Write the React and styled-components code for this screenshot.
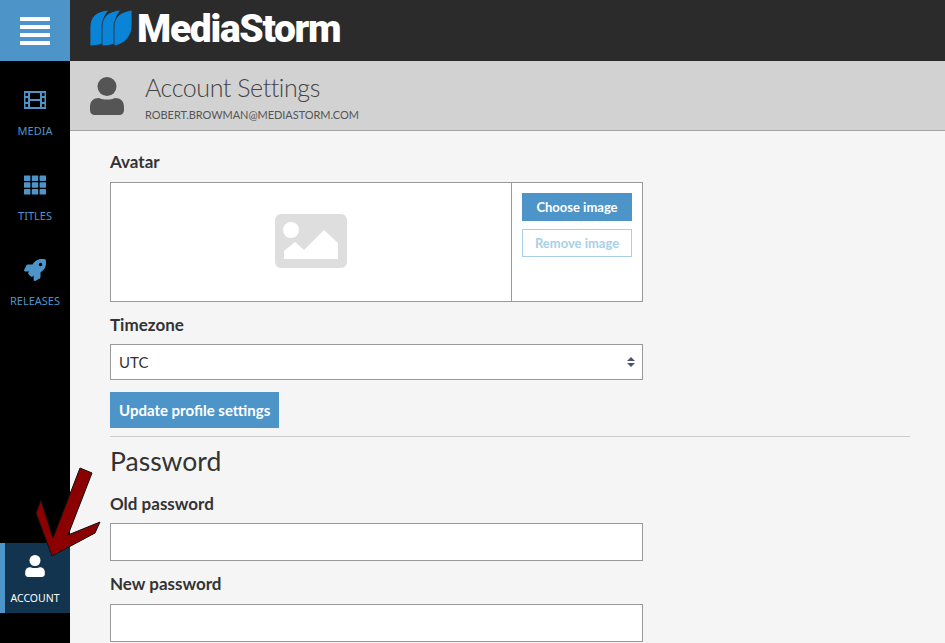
import React from "react"
import styled, { createGlobalStyle } from "styled-components"
import { FaRocket } from "react-icons/fa"

const Global = createGlobalStyle`
  html, body { margin: 0; padding: 0; height: 100%; overflow: hidden; background: #f5f5f5; }
  body { font-family: Lato, "Noto Sans", sans-serif; color: #333; }
  * { box-sizing: border-box; }
`

const FilmIcon = () => (
  <svg width="22" height="18" viewBox="0 0 22 18" fill="#4d95c9">
    <path fillRule="evenodd" d="M4 0h14v18H4zM6 2v6h10V2zM6 10v6h10v-6z" />
    <path d="M0 0h4v2H0zM0 5h4v2H0zM0 11h4v2H0zM0 16h4v2H0zM18 0h4v2h-4zM18 5h4v2h-4zM18 11h4v2h-4zM18 16h4v2h-4zM0 0h1.500v18H0zM20.500 0H22v18h-1.500z" />
  </svg>
)

const GridIcon = () => (
  <svg width="22" height="20" viewBox="0 0 22 19" fill="#4d95c9">
    <rect x="0" y="0" width="6.4" height="5.4" rx="0.6" />
    <rect x="7.8" y="0" width="6.4" height="5.4" rx="0.6" />
    <rect x="15.6" y="0" width="6.4" height="5.4" rx="0.6" />
    <rect x="0" y="6.8" width="6.4" height="5.4" rx="0.6" />
    <rect x="7.8" y="6.8" width="6.4" height="5.4" rx="0.6" />
    <rect x="15.6" y="6.8" width="6.4" height="5.4" rx="0.6" />
    <rect x="0" y="13.6" width="6.4" height="5.4" rx="0.6" />
    <rect x="7.8" y="13.6" width="6.4" height="5.4" rx="0.6" />
    <rect x="15.6" y="13.6" width="6.4" height="5.4" rx="0.6" />
  </svg>
)

const PersonIcon = ({ w, h, color = "#fff" }) => (
  <svg width={w} height={h} viewBox="0 0 34 38" fill={color}>
    <circle cx="17" cy="9.500" r="9.500" />
    <path d="M0 30c0-6 3.500-9 9-9 2.500 1 5 1.500 8 1.500s5.500-.5 8-1.500c5.500 0 9 3 9 9v3c0 3-2 5-5 5H5c-3 0-5-2-5-5z" />
  </svg>
)

const Shell = styled.div`
  display: grid;
  grid-template-columns: 70px minmax(0, 1fr);
  grid-template-rows: 61px minmax(0, 1fr);
  width: 945px;
  height: 643px;
  overflow: hidden;
  position: relative;
`

const Burger = styled.div`
  background: #4d95c9;
  display: flex;
  flex-direction: column;
  justify-content: center;
  align-items: center;
  gap: 4px;
  span { display: block; width: 30px; height: 4px; background: #fff; }
`

const TopBar = styled.header`
  background: #2b2b2b;
  display: flex;
  align-items: center;
  padding: 0 0 5px 20px;
  gap: 5px;
`

const LogoText = styled.div`
  color: #fff;
  font-family: Roboto, "Liberation Sans", sans-serif;
  font-weight: 900;
  font-size: 39px;
  letter-spacing: -1.3px;
  line-height: 1;
  padding-top: 2px;
`

const Side = styled.nav`
  background: #000;
  display: flex;
  flex-direction: column;
  padding-top: 16px;
`

const NavItem = styled.a`
  display: flex;
  flex-direction: column;
  align-items: center;
  height: 85px;
  padding-top: 12px;
  color: #4d95c9;
  font-size: 11px;
  font-family: "Noto Sans", sans-serif;
  gap: 12px;
`

const IconSlot = styled.div`
  height: 22px;
  display: flex;
  align-items: center;
  justify-content: center;
  color: #4d95c9;
`

const NavSpacer = styled.div`
  flex: 1;
`

const AccountItem = styled.a`
  display: flex;
  flex-direction: column;
  align-items: center;
  height: 70px;
  margin-bottom: 30px;
  padding: 12px 5px 0 0;
  gap: 14px;
  background: #12344f;
  border-left: 5px solid #4d95c9;
  color: #fff;
  font-size: 10.500px;
  font-family: "Noto Sans", sans-serif;
`

const Main = styled.main`
  display: flex;
  flex-direction: column;
  min-width: 0;
`

const PageHead = styled.div`
  height: 70px;
  flex: none;
  background: #d2d2d2;
  border-bottom: 1px solid #a3a3a3;
  display: flex;
  align-items: center;
  padding: 0 0 0 20px;
  gap: 21px;
`

const TitleBox = styled.div`
  display: flex;
  flex-direction: column;
  gap: 5px;
  padding-top: 2px;
`

const Title = styled.h1`
  margin: 0;
  font-size: 25px;
  font-weight: 300;
  letter-spacing: -0.44px;
  line-height: 32px;
  color: #444;
`

const Email = styled.div`
  font-size: 11px;
  color: #555;
  letter-spacing: -0.05px;
  line-height: 14px;
`

const Form = styled.form`
  padding: 21px 35px 0 40px;
  display: flex;
  flex-direction: column;
`

const Label = styled.label`
  font-size: 17px;
  font-weight: 700;
  line-height: 20px;
  color: #333;
  margin-bottom: ${p => p.$gap || 10}px;
`

const AvatarBox = styled.div`
  width: 533px;
  height: 120px;
  display: grid;
  grid-template-columns: 1fr 131px;
  background: #fff;
  border: 1px solid #999;
  margin-bottom: 13px;
`

const Preview = styled.div`
  display: flex;
  align-items: center;
  justify-content: center;
  padding-bottom: 2px;
`

const AvatarSide = styled.div`
  border-left: 1px solid #999;
  padding: 10px;
  display: flex;
  flex-direction: column;
  gap: 8px;
`

const Btn = styled.button`
  font-family: inherit;
  font-size: ${p => p.$size || 13}px;
  font-weight: 700;
  height: ${p => p.$h || 28}px;
  padding: 0 ${p => p.$pad || 0}px;
  border: 1px solid #4d95c9;
  background: #4d95c9;
  color: #fff;
  align-self: ${p => p.$start ? "flex-start" : "stretch"};
`

const GhostBtn = styled(Btn)`
  background: #fff;
  border-color: #a9cfe6;
  color: #a9cfe6;
`

const Select = styled.div`
  width: 533px;
  height: 36px;
  border: 1px solid #999;
  background: #fff;
  display: flex;
  align-items: center;
  justify-content: space-between;
  padding: 0 7px 0 8px;
  font-size: 15px;
  margin-bottom: 12px;
`

const Divider = styled.hr`
  border: 0;
  border-top: 1px solid #ccc;
  margin: 8px 0 8px;
  width: 100%;
`

const Section = styled.h2`
  margin: 0 0 17px;
  font-size: 26.500px;
  font-weight: 400;
  line-height: 32px;
  color: #333;
`

const Input = styled.input`
  display: block;
  width: 533px;
  height: 38px;
  border: 1px solid #999;
  background: #fff;
  margin-bottom: 13px;
`

const Arrow = styled.svg`
  position: absolute;
  left: 30px;
  top: 465px;
`

export default function App() {
  return (
    <Shell>
      <Global />
      <Burger><span /><span /><span /><span /></Burger>
      <TopBar>
        <svg width="42" height="36" viewBox="0 0 42 36" fill="#0a84d6" stroke="#2b2b2b" strokeWidth="0.8">
          <path d="M0 36V17C0 7 6 1 19 0c-5 5-6 11-6 18v16c-4 1-9 2-13 2z" />
          <path d="M12 36V17c0-10 6-16 19-17-5 5-6 11-6 18v16c-4 1-9 2-13 2z" />
          <path d="M24 36V17c0-10 6-15 18-17v15c0 11-7 19-18 21z" />
        </svg>
        <LogoText>MediaStorm</LogoText>
      </TopBar>
      <Side>
        <NavItem><IconSlot><FilmIcon /></IconSlot>MEDIA</NavItem>
        <NavItem><IconSlot><GridIcon /></IconSlot>TITLES</NavItem>
        <NavItem><IconSlot><FaRocket size={22} /></IconSlot>RELEASES</NavItem>
        <NavSpacer />
        <AccountItem><PersonIcon w={20} h={22} />ACCOUNT</AccountItem>
      </Side>
      <Main>
        <PageHead>
          <PersonIcon w={34} h={38} color="#555" />
          <TitleBox>
            <Title>Account Settings</Title>
            <Email>ROBERT.BROWMAN@MEDIASTORM.COM</Email>
          </TitleBox>
        </PageHead>
        <Form>
          <Label $gap={10}>Avatar</Label>
          <AvatarBox>
            <Preview>
              <svg width="72" height="54" viewBox="0 0 72 54">
                <rect width="72" height="54" rx="6" fill="#dedede" />
                <circle cx="16" cy="16" r="8" fill="#fff" />
                <path d="M9 45V37l11-9 9 8 20-20 14 13v16z" fill="#fff" />
              </svg>
            </Preview>
            <AvatarSide>
              <Btn type="button">Choose image</Btn>
              <GhostBtn type="button">Remove image</GhostBtn>
            </AvatarSide>
          </AvatarBox>
          <Label $gap={9}>Timezone</Label>
          <Select>
            UTC
            <svg width="8" height="10" viewBox="0 0 9 11" fill="#4a5568">
              <path d="M4.500 0L9 4.500H0zM0 6.500h9L4.500 11z" />
            </svg>
          </Select>
          <Btn type="button" $h={36} $pad={8} $size={15} $start>Update profile settings</Btn>
          <Divider />
          <Section>Password</Section>
          <Label $gap={9}>Old password</Label>
          <Input />
          <Label $gap={10}>New password</Label>
          <Input />
        </Form>
      </Main>
      <Arrow width="75" height="95" viewBox="0 0 75 95">
        <path d="M50 3L62 8 38 70 70 57 65 68 22 91 6 48 11 35 23 73z" fill="#8b0000" stroke="#111" strokeWidth="1" />
      </Arrow>
    </Shell>
  )
}
